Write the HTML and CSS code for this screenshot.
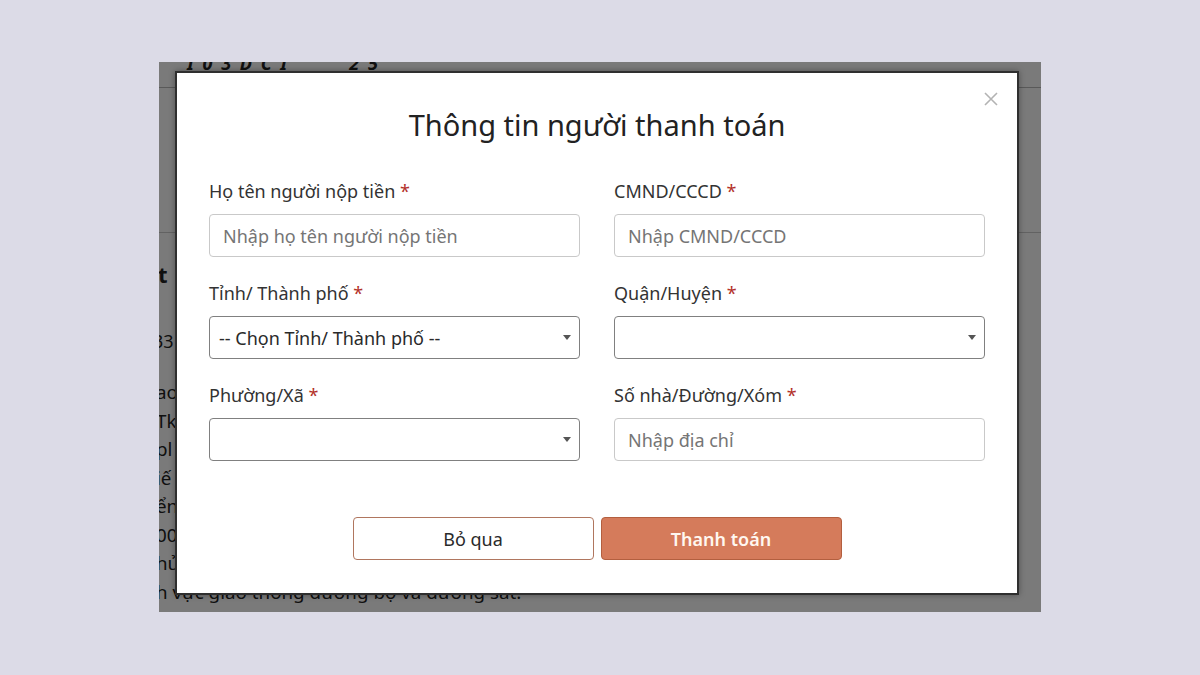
FILE: index.html
```html
<!DOCTYPE html>
<html lang="vi">
<head>
<meta charset="utf-8">
<title>Thông tin người thanh toán</title>
<link rel="stylesheet" href="styles.css">
</head>
<body>
<div class="screen">
  <div class="page">
    <div class="page-head"><span class="head-text">I 0 3 D C I &nbsp; &nbsp; &nbsp; &nbsp; 2 5</span></div>
    <div class="page-band"></div>
    <div class="page-title">t</div>
    <div class="page-num">33</div>
    <div class="page-lines">
      <div>ao</div>
      <div>Tk</div>
      <div>pl</div>
      <div>iế</div>
      <div>ển</div>
      <div>00</div>
      <div>hủ</div>
      <div>h vực giao thông đường bộ và đường sắt.</div>
    </div>
  </div>
  <div class="shade"></div>
  <div class="modal">
    <button class="close" aria-label="Đóng">
      <svg width="14" height="14" viewBox="0 0 14 14"><path d="M1 1L13 13M13 1L1 13" stroke="#b3b3b3" stroke-width="1.6" fill="none"/></svg>
    </button>
    <h1 class="modal-title">Thông tin người thanh toán</h1>
    <div class="form-grid">
      <div class="field">
        <label class="label">Họ tên người nộp tiền <span class="req">*</span></label>
        <input class="input" type="text" placeholder="Nhập họ tên người nộp tiền">
      </div>
      <div class="field">
        <label class="label">CMND/CCCD <span class="req">*</span></label>
        <input class="input" type="text" placeholder="Nhập CMND/CCCD">
      </div>
      <div class="field">
        <label class="label">Tỉnh/ Thành phố <span class="req">*</span></label>
        <div class="select"><span>-- Chọn Tỉnh/ Thành phố --</span><svg class="caret" width="8" height="5" viewBox="0 0 8 5"><path d="M0 0H8L4 5Z" fill="#555"/></svg></div>
      </div>
      <div class="field">
        <label class="label">Quận/Huyện <span class="req">*</span></label>
        <div class="select"><span></span><svg class="caret" width="8" height="5" viewBox="0 0 8 5"><path d="M0 0H8L4 5Z" fill="#555"/></svg></div>
      </div>
      <div class="field">
        <label class="label">Phường/Xã <span class="req">*</span></label>
        <div class="select"><span></span><svg class="caret" width="8" height="5" viewBox="0 0 8 5"><path d="M0 0H8L4 5Z" fill="#555"/></svg></div>
      </div>
      <div class="field">
        <label class="label">Số nhà/Đường/Xóm <span class="req">*</span></label>
        <input class="input" type="text" placeholder="Nhập địa chỉ">
      </div>
    </div>
    <div class="actions">
      <button class="btn btn-outline">Bỏ qua</button>
      <button class="btn btn-primary">Thanh toán</button>
    </div>
  </div>
</div>
</body>
</html>
```
FILE: styles.css
```css
* { box-sizing: border-box; }
html, body { margin: 0; padding: 0; }
body {
  background: #dcdbe7;
  font-family: "Noto Sans", Lato, sans-serif;
  width: 1200px;
  height: 675px;
  overflow: hidden;
  padding-top: 62px;
}
.screen {
  position: relative;
  margin-left: 159px;
  width: 882px;
  height: 550px;
  overflow: hidden;
  background: #fff;
}
.page { color: #222; font-size: 18px; }
.page-head {
  height: 26px;
  border-bottom: 1px solid #bbb;
  padding-left: 28px;
  overflow: hidden;
}
.head-text {
  display: block;
  margin-top: -9px;
  font-size: 18px;
  font-weight: 700;
  font-style: italic;
  letter-spacing: 2px;
  line-height: 20px;
}
.page-band { height: 145px; border-bottom: 1px solid #ccc; }
.page-title {
  margin-top: 26px;
  margin-left: -1px;
  font-size: 22px;
  font-weight: 700;
  line-height: 30px;
}
.page-num { margin-top: 38px; margin-left: -6px; line-height: 28px; }
.page-lines { margin-top: 23px; margin-left: -3px; line-height: 28.5px; font-size: 18.8px; }
.shade {
  position: absolute;
  inset: 0;
  background: rgba(0, 0, 0, 0.52);
}
.modal {
  position: absolute;
  left: 16px;
  top: 9px;
  width: 844px;
  height: 524px;
  background: #fff;
  border: 2px solid #2f2f2f;
  box-shadow: 0 0 6px rgba(0, 0, 0, 0.35);
  padding: 34px 32px 0;
}
.close {
  position: absolute;
  right: 19px;
  top: 19px;
  padding: 0;
  border: 0;
  background: none;
  line-height: 0;
}
.modal-title {
  margin: 0 0 36px;
  text-align: center;
  font-size: 29px;
  line-height: 36px;
  font-weight: 400;
  color: #222;
}
.form-grid {
  display: grid;
  grid-template-columns: 1fr 1fr;
  column-gap: 34px;
}
.field { margin-bottom: 24px; }
.label {
  display: block;
  font-size: 18px;
  line-height: 24px;
  color: #333;
  margin-bottom: 11px;
}
.req { color: #b3312a; }
.input {
  display: block;
  width: 100%;
  height: 43px;
  border: 1px solid #c9c9c9;
  border-radius: 4px;
  padding: 0 13px;
  font-family: inherit;
  font-size: 18px;
  color: #333;
  outline: none;
}
.input::placeholder { color: #757575; }
.select {
  display: flex;
  align-items: center;
  justify-content: space-between;
  height: 43px;
  border: 1px solid #808080;
  border-radius: 4px;
  padding: 0 8px 0 9px;
  font-size: 18px;
  color: #2a2a2a;
}
.caret { flex: none; }
.actions {
  display: flex;
  justify-content: center;
  gap: 7px;
  margin-top: 32px;
}
.btn {
  width: 241px;
  height: 43px;
  border-radius: 4px;
  font-family: inherit;
  font-size: 18px;
}
.btn-outline {
  background: #fff;
  border: 1px solid #b0765f;
  color: #2a2a2a;
}
.btn-primary {
  background: #d57b5b;
  border: 1px solid #b35f3f;
  color: #fff7f0;
  font-weight: 600;
}
```
